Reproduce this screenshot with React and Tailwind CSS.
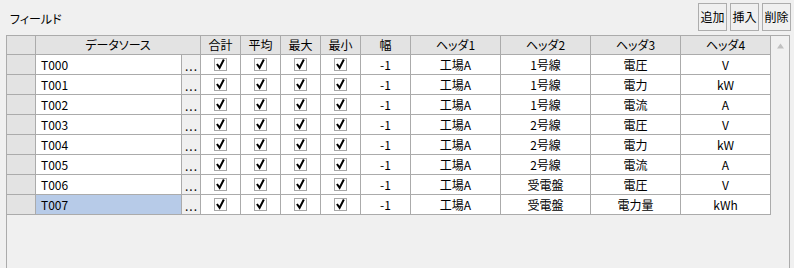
import React from 'react'

const rows = [
  ['T000', '工場A', '1号線', '電圧', 'V'],
  ['T001', '工場A', '1号線', '電力', 'kW'],
  ['T002', '工場A', '1号線', '電流', 'A'],
  ['T003', '工場A', '2号線', '電圧', 'V'],
  ['T004', '工場A', '2号線', '電力', 'kW'],
  ['T005', '工場A', '2号線', '電流', 'A'],
  ['T006', '工場A', '受電盤', '電圧', 'V'],
  ['T007', '工場A', '受電盤', '電力量', 'kWh'],
]

function Check() {
  return (
    <div className="w-[13px] h-[13px] border border-[#a8a8a8] bg-white flex items-center justify-center">
      <svg width="11" height="11" viewBox="0 0 11 11">
        <path d="M2.5 5.8 L4.6 8.8 L8.4 1.4" fill="none" stroke="#000" strokeWidth="2" strokeLinecap="square" />
      </svg>
    </div>
  )
}

function Btn({ children }) {
  return (
    <div className="w-[29px] h-[28px] border border-[#adadad] bg-[#f0f0f0] flex items-center justify-center text-[12px] text-black">
      {children}
    </div>
  )
}

export default function App() {
  const cell = 'h-full border-r border-[#ababab] flex items-center justify-center'

  return (
    <div
      className="w-[794px] h-[268px] bg-[#f0f0f0] overflow-hidden text-black [font-feature-settings:'palt']"
      style={{ fontFamily: '"Noto Sans CJK JP", "Noto Sans", sans-serif' }}
    >
      {/* top */}
      <div className="flex h-[35px] items-start">
        <div className="ml-[10px] mt-[11px] text-[12px] leading-[16px]">フィールド</div>
        <div className="ml-auto mt-[3px] mr-[3px] flex gap-[3px]">
          <Btn>追加</Btn>
          <Btn>挿入</Btn>
          <Btn>削除</Btn>
        </div>
      </div>

      {/* grid */}
      <div className="ml-[6px] w-[784px] h-[233px] border-l border-t border-r border-[#ababab] flex">
        <div className="w-[764px] text-[12px]">
          {/* header */}
          <div className="flex h-[19px] border-b border-[#ababab] bg-[#e3e3e3]">
            <div className={`${cell} w-[29px]`}></div>
            <div className={`${cell} w-[165px]`}>データソース</div>
            <div className={`${cell} w-[40px]`}>合計</div>
            <div className={`${cell} w-[40px]`}>平均</div>
            <div className={`${cell} w-[40px]`}>最大</div>
            <div className={`${cell} w-[40px]`}>最小</div>
            <div className={`${cell} w-[50px]`}>幅</div>
            <div className={`${cell} w-[90px]`}>ヘッダ1</div>
            <div className={`${cell} w-[90px]`}>ヘッダ2</div>
            <div className={`${cell} w-[90px]`}>ヘッダ3</div>
            <div className={`${cell} w-[90px]`}>ヘッダ4</div>
          </div>

          {rows.map((r, i) => {
            const selected = i === rows.length - 1
            return (
              <div key={r[0]} className="flex h-[20px] border-b border-[#ababab] bg-white">
                <div className={`${cell} w-[29px] bg-[#e3e3e3]`}></div>
                <div
                  className={`h-full w-[146px] border-r border-[#ababab] flex items-center pl-[5px] ${
                    selected ? 'bg-[#b7cbe8]' : 'bg-white'
                  }`}
                >
                  {r[0]}
                </div>
                <div className={`${cell} w-[19px] bg-[#f0f0f0] tracking-[1px] pl-[1px] pt-[2px]`}>...</div>
                <div className={`${cell} w-[40px]`}><Check /></div>
                <div className={`${cell} w-[40px]`}><Check /></div>
                <div className={`${cell} w-[40px]`}><Check /></div>
                <div className={`${cell} w-[40px]`}><Check /></div>
                <div className={`${cell} w-[50px]`}>-1</div>
                <div className={`${cell} w-[90px]`}>{r[1]}</div>
                <div className={`${cell} w-[90px]`}>{r[2]}</div>
                <div className={`${cell} w-[90px]`}>{r[3]}</div>
                <div className={`${cell} w-[90px]`}>{r[4]}</div>
              </div>
            )
          })}
        </div>

        {/* vertical scrollbar */}
        <div className="w-[18px] flex justify-center pt-[7px]">
          <svg width="7" height="6" viewBox="0 0 7 6">
            <path d="M0 5.5 L3.5 0.5 L7 5.5 Z" fill="#c0c0c0" />
          </svg>
        </div>
      </div>
    </div>
  )
}
